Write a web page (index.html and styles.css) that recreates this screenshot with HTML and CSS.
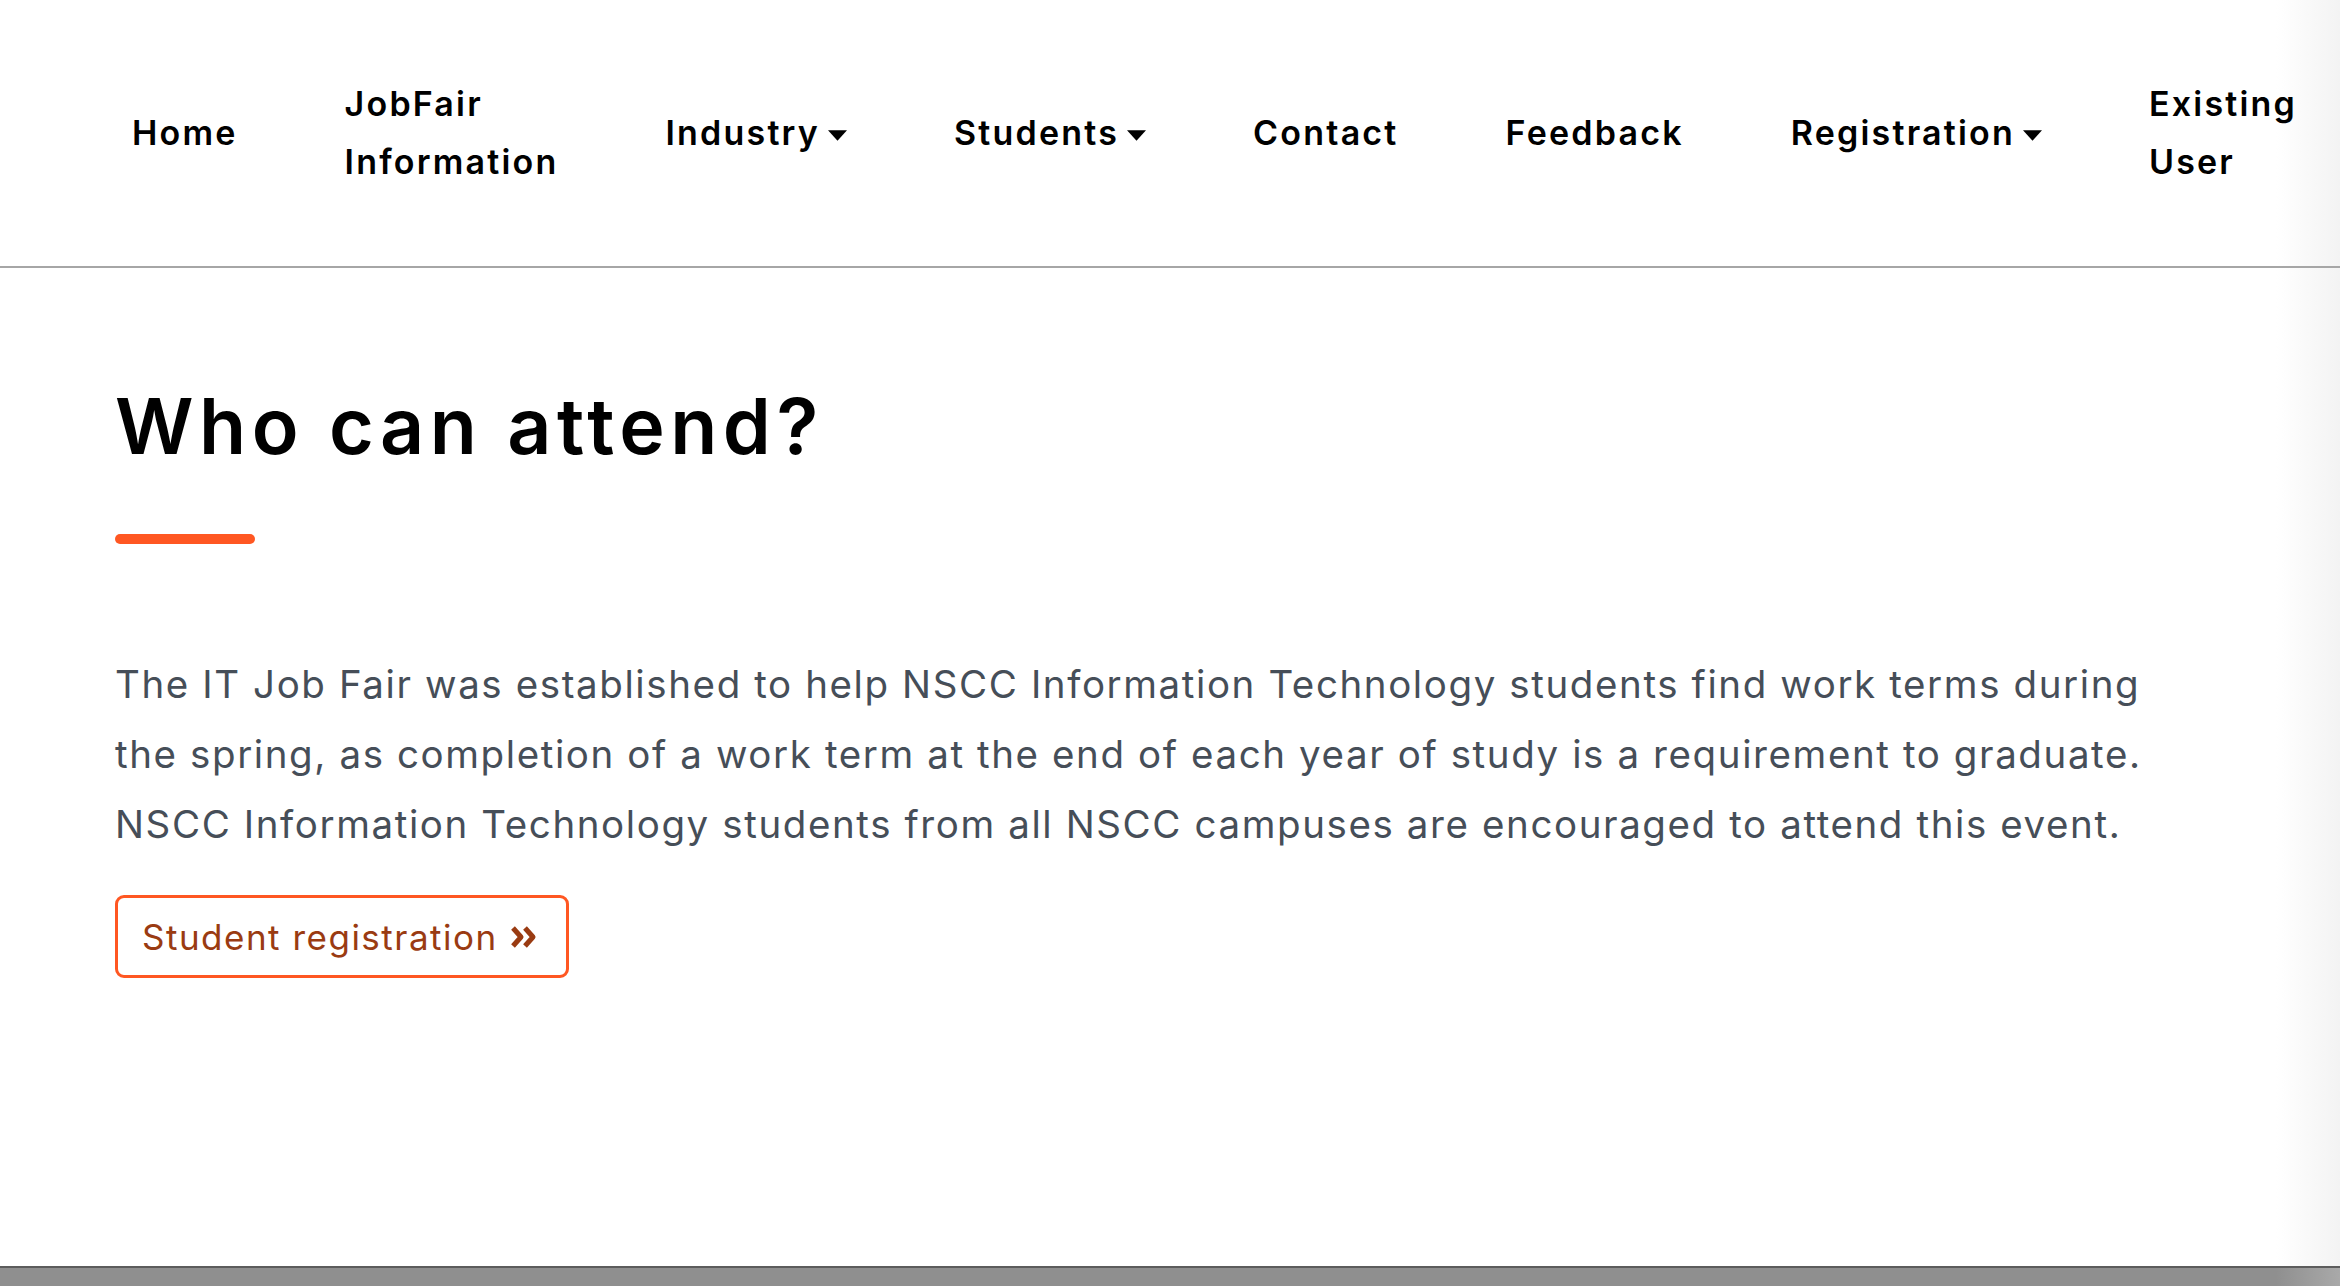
FILE: index.html
```html
<!DOCTYPE html>
<html lang="en">
<head>
<meta charset="utf-8">
<title>IT Job Fair - Who can attend?</title>
<link rel="stylesheet" href="styles.css">
</head>
<body>
<div class="window">
  <div class="page">
    <header class="site-header">
      <nav class="nav">
        <a class="nav-link" href="#">Home</a>
        <a class="nav-link" href="#">JobFair<br>Information</a>
        <a class="nav-link" href="#">Industry<svg class="caret" viewBox="0 0 20 11"><path d="M0 0H20L10 11Z"/></svg></a>
        <a class="nav-link" href="#">Students<svg class="caret" viewBox="0 0 20 11"><path d="M0 0H20L10 11Z"/></svg></a>
        <a class="nav-link" href="#">Contact</a>
        <a class="nav-link" href="#">Feedback</a>
        <a class="nav-link" href="#">Registration<svg class="caret" viewBox="0 0 20 11"><path d="M0 0H20L10 11Z"/></svg></a>
        <a class="nav-link" href="#">Existing<br>User</a>
      </nav>
    </header>
    <main class="content">
      <h1 class="title">Who can attend?</h1>
      <span class="accent-bar"></span>
      <p class="lead">The IT Job Fair was established to help NSCC Information Technology students find work terms during<br>the spring, as completion of a work term at the end of each year of study is a requirement to graduate.<br>NSCC Information Technology students from all NSCC campuses are encouraged to attend this event.</p>
      <a class="btn-outline" href="#">Student registration<svg class="dbl-angle" viewBox="0 0 28 24"><path d="M3 3L11 12L3 21M15 3L23 12L15 21"/></svg></a>
    </main>
  </div>
  <div class="bottom-bar"></div>
</div>
</body>
</html>
```

FILE: styles.css
```css
* { box-sizing: border-box; }

html, body {
  margin: 0;
  padding: 0;
}

body {
  font-family: "Inter", "Open Sans", "DejaVu Sans", sans-serif;
  color: #000;
}

.window {
  width: 2340px;
  height: 1286px;
  display: flex;
  flex-direction: column;
  overflow: hidden;
}

.page {
  flex: 1;
  display: flex;
  flex-direction: column;
  background: linear-gradient(to right, #ffffff 0, #ffffff calc(100% - 64px), #f3f3f3 100%);
}

.site-header {
  height: 268px;
  border-bottom: 2px solid #a6a6a6;
  display: flex;
  align-items: center;
}

.nav {
  display: flex;
  align-items: center;
  gap: 107px;
  padding-left: 132px;
}

.nav-link {
  display: inline-flex;
  align-items: center;
  font-size: 34px;
  line-height: 58px;
  font-weight: 600;
  letter-spacing: 2.2px;
  color: #000;
  text-decoration: none;
  white-space: nowrap;
}

.caret {
  width: 19px;
  height: 11px;
  margin-left: 8px;
  margin-top: 4px;
  fill: #000;
}

.content {
  padding: 112px 0 0 115px;
  display: flex;
  flex-direction: column;
  align-items: flex-start;
}

.title {
  margin: 0;
  font-size: 77px;
  line-height: 92px;
  font-weight: 600;
  letter-spacing: 5.5px;
  color: #000;
}

.accent-bar {
  display: block;
  width: 140px;
  height: 10px;
  margin-top: 62px;
  border-radius: 5px;
  background: #ff5722;
}

.lead {
  margin: 105px 0 0;
  font-size: 38.5px;
  line-height: 70px;
  font-weight: 400;
  letter-spacing: 1.6px;
  color: #464e58;
  white-space: nowrap;
}

.btn-outline {
  display: inline-flex;
  align-items: center;
  height: 83px;
  margin-top: 36px;
  padding: 0 28px 0 24px;
  border: 3px solid #ff5722;
  border-radius: 9px;
  font-size: 35px;
  font-weight: 400;
  letter-spacing: 1.5px;
  color: #9a3b12;
  text-decoration: none;
}

.dbl-angle {
  width: 28px;
  height: 24px;
  margin-left: 12px;
  fill: none;
  stroke: #9a3b12;
  stroke-width: 5;
  stroke-linejoin: round;
}

.bottom-bar {
  height: 20px;
  border-top: 2px solid #5c5c5c;
  background: linear-gradient(to right, #8f8f8f 0, #8f8f8f calc(100% - 64px), #a9a9a9 100%);
}
```
